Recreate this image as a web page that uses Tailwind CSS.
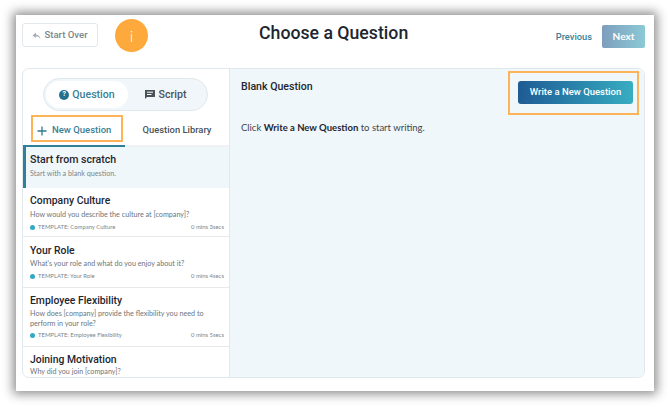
<!doctype html>
<html><head><meta charset="utf-8"><script src="https://cdn.jsdelivr.net/npm/@tailwindcss/browser@4"></script></head>
<body class="bg-white m-0">
<div class="w-[670px] h-[407px] overflow-hidden pt-[15px] pl-[16px] font-['Lato',sans-serif]">
<div class="relative w-[638px] h-[376px] bg-white shadow-[0_0_10px_3px_rgba(0,0,0,0.45)] px-[6px] flex flex-col">
  <div class="h-[53px] shrink-0 flex items-start relative">
    <div class="mt-[8px] w-[76px] h-[24px] border border-[#e3e8ec] rounded-[3px] flex items-center justify-center gap-[3px] text-[#7c858c] text-[9.6px] font-['Roboto'] font-medium pt-[1px]">
      <svg width="9" height="8" viewBox="0 0 9 8"><path d="M4 0.5 L0.5 3.5 L4 6 V4.2 C6 4.2 7.5 5 8.5 7.5 C8.3 4.5 6.5 2.8 4 2.6 Z" fill="#aab1b6"/></svg>Start Over</div>
    <div class="ml-[17px] mt-[4px] w-[33px] h-[33px] rounded-full bg-[#fda93c] flex items-center justify-center text-white text-[16px] font-light">i</div>
    <div class="absolute left-[237px] top-[6px] text-[#1d2630] text-[17.7px] leading-[24px] font-['Roboto'] font-medium whitespace-nowrap">Choose a Question</div>
    <div class="ml-auto mr-[3px] mt-[10px] flex items-start">
      <div class="mr-[10px] mt-[6px] text-[#3a7f97] text-[9.3px] leading-[12px] font-['Roboto'] font-medium">Previous</div>
      <div class="w-[43px] h-[23px] rounded-[2px] bg-gradient-to-r from-[#7d9ebd] to-[#8cc9d6] flex items-center justify-center text-white text-[10px] font-bold">Next</div>
    </div>
  </div>
  <div class="w-[623px] h-[310px] border border-[#dfe8ec] rounded-[7px] overflow-hidden flex bg-white">
    <div class="w-[207px] shrink-0 flex flex-col border-r border-[#dfe8ec]">
      <div class="pt-[9px] pl-[20px]">
        <div class="w-[165px] h-[33px] rounded-full bg-[#f0f6f9] border border-[#dfe8ec] flex items-center p-[2px]">
          <div class="w-[82px] h-[27px] rounded-full bg-white flex items-center justify-center gap-[3px] text-[#3a7f97] text-[10.6px] font-['Roboto'] font-medium">
            <span class="w-[10px] h-[10px] rounded-full bg-[#24708f] flex items-center justify-center text-white text-[7px] font-bold leading-none">?</span>Question</div>
          <div class="flex-1 flex items-center justify-center gap-[4px] text-[#4a5258] text-[10.6px] font-['Roboto'] font-medium pr-[2px]">
            <svg width="10" height="9" viewBox="0 0 10 9"><path d="M0 0H10V7H2L0 9Z" fill="#4a5258"/><path d="M2 2.2H8M2 4.5H6.5" stroke="#fff" stroke-width="1"/></svg>Script</div>
        </div>
      </div>
      <div class="h-[34px] flex shrink-0">
        <div class="w-[102px] flex items-center pl-[14px] gap-[5px] text-[#3a7f97] text-[9.5px] font-['Roboto'] font-medium pt-[5px]">
          <svg width="10" height="10" viewBox="0 0 10 10"><path d="M5 0.5V9.5M0.5 5H9.5" stroke="#2f7890" stroke-width="1.3"/></svg>New Question</div>
        <div class="flex-1 flex items-center justify-center text-[#4a5258] text-[9.4px] font-['Roboto'] font-medium pt-[5px]">Question Library</div>
      </div>
      <div class="relative h-[2px] bg-[#eef2f4] shrink-0"><div class="w-[102px] h-[2px] bg-[#2f8199]"></div></div>
      <div class="h-[41px] shrink-0 bg-[#f0f7fa] border-l-[3px] border-[#2f8199] pl-[4px] pt-[6px]">
        <div class="text-[#1d2630] text-[10.6px] leading-[14px] font-['Roboto'] font-medium">Start from scratch</div>
        <div class="text-[#7c858c] text-[7.2px] leading-[10px] mt-[2px]">Start with a blank question.</div>
      </div>
      <div class="h-[49px] shrink-0 border-b border-[#e6eaec] pl-[7px] pr-[5px] pt-[6px]">
        <div class="text-[#1d2630] text-[10.4px] leading-[14px] font-['Roboto'] font-medium">Company Culture</div>
        <div class="text-[#6d757b] text-[7.2px] leading-[10px] mt-[2px]">How would you describe the culture at [company]?</div>
        <div class="flex items-center justify-between mt-[3px] text-[#7c858c] text-[5.9px] leading-[8px]"><span class="flex items-center gap-[3px]"><span class="w-[5px] h-[5px] rounded-full bg-[#35a9c4]"></span>TEMPLATE: Company Culture</span><span>0 mins 3secs</span></div>
      </div>
      <div class="h-[51px] shrink-0 border-b border-[#e6eaec] pl-[7px] pr-[5px] pt-[7px]">
        <div class="text-[#1d2630] text-[10.4px] leading-[14px] font-['Roboto'] font-medium">Your Role</div>
        <div class="text-[#6d757b] text-[7.2px] leading-[10px] mt-[1px]">What's your role and what do you enjoy about it?</div>
        <div class="flex items-center justify-between mt-[3px] text-[#7c858c] text-[5.9px] leading-[8px]"><span class="flex items-center gap-[3px]"><span class="w-[5px] h-[5px] rounded-full bg-[#35a9c4]"></span>TEMPLATE: Your Role</span><span>0 mins 4secs</span></div>
      </div>
      <div class="h-[59px] shrink-0 border-b border-[#e6eaec] pl-[7px] pr-[5px] pt-[6px]">
        <div class="text-[#1d2630] text-[10.4px] leading-[14px] font-['Roboto'] font-medium">Employee Flexibility</div>
        <div class="text-[#6d757b] text-[7.2px] leading-[10px] mt-[1px] whitespace-nowrap">How does [company] provide the flexibility you need to<br>perform in your role?</div>
        <div class="flex items-center justify-between mt-[2px] text-[#7c858c] text-[5.9px] leading-[8px]"><span class="flex items-center gap-[3px]"><span class="w-[5px] h-[5px] rounded-full bg-[#35a9c4]"></span>TEMPLATE: Employee Flexibility</span><span>0 mins 5secs</span></div>
      </div>
      <div class="flex-1 min-h-0 overflow-hidden pl-[7px] pt-[6px]">
        <div class="text-[#1d2630] text-[10.4px] leading-[14px] font-['Roboto'] font-medium">Joining Motivation</div>
        <div class="text-[#6d757b] text-[7.2px] leading-[10px]">Why did you join [company]?</div>
      </div>
    </div>
    <div class="flex-1 bg-[#f0f7fa] pl-[11px] pr-[11px] relative">
      <div class="flex items-start justify-between">
        <div class="mt-[11px] text-[#1d2630] text-[10.6px] leading-[14px] font-['Roboto'] font-medium">Blank Question</div>
        <div class="mt-[12px] w-[115px] h-[23px] rounded-[3px] bg-gradient-to-r from-[#1f5b94] to-[#38adc1] flex items-center justify-center text-white text-[9.5px] font-['Roboto'] font-medium">Write a New Question</div>
      </div>
      <div class="mt-[17px] text-[#3d4650] text-[9.5px] leading-[13px]">Click <b class="font-bold text-[#1d2630]">Write a New Question</b> to start writing.</div>
    </div>
  </div>
  <div class="absolute left-[15px] top-[100px] w-[92px] h-[27px] border-2 border-[#fdb357]"></div>
  <div class="absolute left-[492px] top-[56px] w-[131px] h-[44px] border-2 border-[#fdb357]"></div>
</div>
</div>
</body></html>
